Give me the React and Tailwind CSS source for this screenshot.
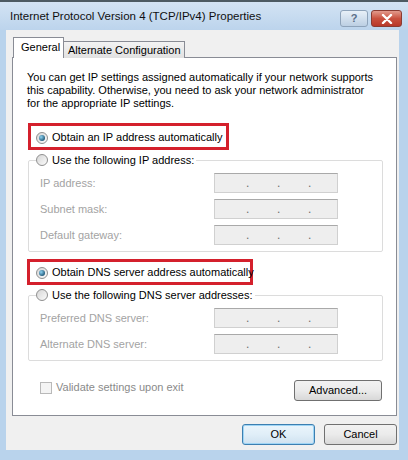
import React from 'react';

function Radio({ checked }) {
  return (
    <span className="w-[12px] h-[12px] rounded-full border border-[#8f8f8f] bg-gradient-to-br from-[#d6d6d6] to-[#fbfbfb] flex items-center justify-center shrink-0">
      {checked && <span className="w-[6px] h-[6px] rounded-full bg-[radial-gradient(circle_at_35%_35%,#8fd3f2,#1f5878_75%)]" />}
    </span>
  );
}

function IpBox() {
  return (
    <div className="w-[124px] h-[20px] border border-[#d0d0d0] border-t-[#a9a9a9] bg-[#eeeeee] flex items-end pb-[3px] pl-[31px] gap-[28px] text-[#6f6f6f] text-[12px] leading-none">
      <span className="w-[3px] text-center">.</span>
      <span className="w-[3px] text-center">.</span>
      <span className="w-[3px] text-center">.</span>
    </div>
  );
}

function FieldRow({ label }) {
  return (
    <div className="flex items-center h-[20px] pl-[11px] shrink-0">
      <span className="w-[174px] text-[#a3a3a3]">{label}</span>
      <IpBox />
    </div>
  );
}

function RadioLine({ checked, children }) {
  return (
    <div className="flex items-center gap-[4px] whitespace-nowrap">
      <Radio checked={checked} />
      <span className="text-black">{children}</span>
    </div>
  );
}

export default function App() {
  return (
    <div className="w-[408px] h-[460px] bg-[#b9d3ec] border-t-2 border-[#4d5a63] flex flex-col text-[11px] leading-[13px] text-black font-['Liberation_Sans',Arial,sans-serif] overflow-hidden">
      {/* Title bar */}
      <div className="h-[28px] shrink-0 flex items-center justify-between pl-[10px] pr-[6px] bg-gradient-to-b from-[#d3e3f4] to-[#bcd4ec]">
        <span className="text-[11.5px] text-[#101010] whitespace-nowrap mt-[1px]">Internet Protocol Version 4 (TCP/IPv4) Properties</span>
        <div className="flex items-center gap-[3px] self-start mt-[8px]">
          <div className="w-[28px] h-[17px] rounded-[3px] border border-[#8ea3ba] bg-gradient-to-b from-[#e8f0f8] to-[#bccfe3] flex items-center justify-center text-[11px] font-bold text-[#5a6f88]">?</div>
          <div className="w-[31px] h-[17px] rounded-[3px] border border-[#8a3b32] bg-gradient-to-b from-[#e29a8d] via-[#c9513f] to-[#b8382a] flex items-center justify-center">
            <svg width="12" height="10" viewBox="0 0 12 10">
              <path d="M2 1 L10 9 M10 1 L2 9" stroke="#fff" strokeWidth="2.4" strokeLinecap="round" />
            </svg>
          </div>
        </div>
      </div>

      {/* Client area */}
      <div className="ml-[6px] w-[393px] h-[420px] shrink-0 bg-[#f0f0f0] pt-[7px] flex flex-col">
        {/* Tabs */}
        <div className="flex items-end ml-[7px] h-[21px] shrink-0 relative z-10 whitespace-nowrap">
          <div className="w-[51px] h-[21px] bg-white border border-b-0 border-[#898c95] pl-[7px] pt-[3px]">General</div>
          <div className="w-[121px] h-[17px] bg-gradient-to-b from-[#f3f3f3] to-[#e1e1e1] border border-l-0 border-b-0 border-[#898c95] pl-[4px] pt-[2px]">Alternate Configuration</div>
        </div>

        {/* Panel */}
        <div className="ml-[6px] w-[385px] h-[359px] shrink-0 -mt-[1px] bg-white border border-[#898c95] flex flex-col">
          <p className="pt-[13px] pl-[14px] whitespace-nowrap shrink-0">
            You can get IP settings assigned automatically if your network supports<br />
            this capability. Otherwise, you need to ask your network administrator<br />
            for the appropriate IP settings.
          </p>

          <div className="mt-[13px] ml-[15px] w-[201px] h-[27px] shrink-0 border-[3px] border-[#d4202c] pl-[5px] pt-[2px] flex items-center">
            <RadioLine checked>Obtain an IP address automatically</RadioLine>
          </div>

          <fieldset className="mt-[2px] ml-[15px] w-[355px] shrink-0 border border-[#dcdcdc] rounded-[2px] pb-[6px]">
            <legend className="ml-[7px] pr-[2px] h-[16px] flex items-center">
              <RadioLine>Use the following IP address:</RadioLine>
            </legend>
            <div className="mt-[5px] flex flex-col gap-[6px]">
              <FieldRow label="IP address:" />
              <FieldRow label="Subnet mask:" />
              <FieldRow label="Default gateway:" />
            </div>
          </fieldset>

          <div className="mt-[7px] ml-[14px] w-[226px] h-[26px] shrink-0 border-[3px] border-[#d4202c] pl-[6px] pt-[1px] flex items-center">
            <RadioLine checked>Obtain DNS server address automatically</RadioLine>
          </div>

          <fieldset className="mt-[2px] ml-[15px] w-[355px] shrink-0 border border-[#dcdcdc] rounded-[2px] pb-[6px]">
            <legend className="ml-[7px] pr-[2px] h-[16px] flex items-center">
              <RadioLine>Use the following DNS server addresses:</RadioLine>
            </legend>
            <div className="mt-[5px] flex flex-col gap-[6px]">
              <FieldRow label="Preferred DNS server:" />
              <FieldRow label="Alternate DNS server:" />
            </div>
          </fieldset>

          <div className="mt-[19px] pl-[27px] pr-[14px] shrink-0 flex items-start justify-between">
            <div className="flex items-center gap-[4px] mt-[1px]">
              <span className="w-[12px] h-[12px] border border-[#b9b9b9] bg-[#f4f4f4]" />
              <span className="text-[#8a8a8a]">Validate settings upon exit</span>
            </div>
            <button className="w-[88px] h-[21px] rounded-[3px] border border-[#707070] bg-gradient-to-b from-[#f2f2f2] via-[#ebebeb] to-[#d8d8d8] text-black">Advanced...</button>
          </div>
        </div>

        {/* Dialog buttons */}
        <div className="mt-[8px] flex justify-end gap-[9px] pr-[2px] shrink-0">
          <button className="w-[73px] h-[21px] rounded-[3px] border border-[#3c7fb1] bg-gradient-to-b from-[#eaf5fc] via-[#e0eef8] to-[#cfe2f0] shadow-[inset_0_0_0_1px_#9fd5f5] text-black">OK</button>
          <button className="w-[73px] h-[21px] rounded-[3px] border border-[#707070] bg-gradient-to-b from-[#f2f2f2] via-[#ebebeb] to-[#d8d8d8] text-black">Cancel</button>
        </div>
      </div>
    </div>
  );
}
